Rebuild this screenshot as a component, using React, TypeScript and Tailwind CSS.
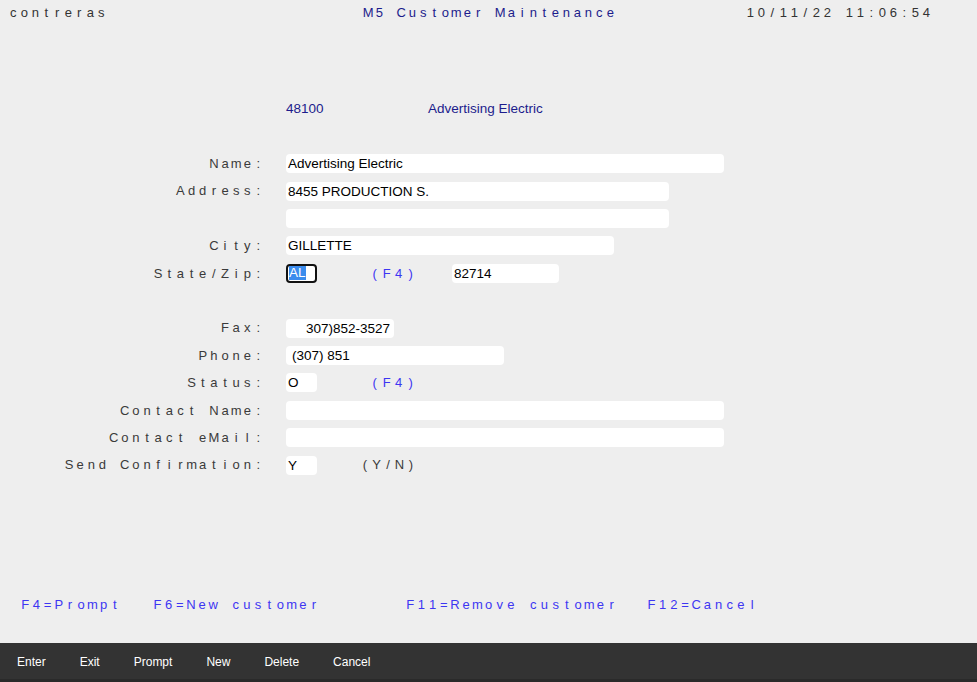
import React from "react";

function Sp({ t, cell, className = "" }: { t: string; cell: string; className?: string }) {
  return (
    <span className={"inline-flex whitespace-pre " + className}>
      {[...t].map((c, i) => (
        <span key={i} className={"inline-block text-center " + cell}>
          {c === " " ? "\u00a0" : c}
        </span>
      ))}
    </span>
  );
}

function Row({ label, children }: { label?: string; children?: React.ReactNode }) {
  return (
    <div className="flex items-center h-[27.4px]">
      <div className="w-[264px] flex justify-end shrink-0">
        {label ? <Sp t={label} cell="w-[11.15px]" className="text-[13px] text-[#3a3a3a]" /> : null}
      </div>
      <div className="ml-[22px] flex items-center">{children}</div>
    </div>
  );
}

function Field({ w, children, pad = "pl-[2px]" }: { w: string; children?: React.ReactNode; pad?: string }) {
  return (
    <div className={"h-[19px] bg-white rounded-[4px] text-[13.5px] leading-[19px] text-black whitespace-pre overflow-hidden shrink-0 " + w + " " + pad}>
      {children}
    </div>
  );
}

export default function App() {
  const buttons = ["Enter", "Exit", "Prompt", "New", "Delete", "Cancel"];
  return (
    <div className="h-screen flex flex-col bg-[#eeeeee] font-['Liberation_Sans',Arial,sans-serif] overflow-hidden">
      <div className="flex-1 pt-[1px]">
        <div className="flex items-center h-[24px] text-[13px]">
          <Sp t="contreras" cell="w-[11px]" className="ml-[7.75px] text-[#333333]" />
          <Sp t="M5 Customer Maintenance" cell="w-[11px]" className="ml-[256px] text-[#1c1c8c]" />
          <Sp t="10/11/22 11:06:54" cell="w-[11px]" className="ml-[129px] text-[#333333]" />
        </div>
        <div className="h-[70.3px]" />
        <div className="flex items-center h-[27.4px] pl-[286px] text-[13.5px] text-[#1c1c8c]">
          <span className="w-[142px]">48100</span>
          <span>Advertising Electric</span>
        </div>
        <div className="h-[27.4px]" />
        <Row label="Name:">
          <Field w="w-[438px]">Advertising Electric</Field>
        </Row>
        <Row label="Address:">
          <Field w="w-[383px]">8455 PRODUCTION S.</Field>
        </Row>
        <Row>
          <Field w="w-[383px]" />
        </Row>
        <Row label="City:">
          <Field w="w-[328px]">GILLETTE</Field>
        </Row>
        <Row label="State/Zip:">
          <div className="h-[19px] w-[31px] bg-white rounded-[4px] border-2 border-[#111111] flex items-center pl-[1px] shrink-0">
            <span className="bg-[#3b8ced] text-white text-[13.5px] leading-[14px]">AL</span>
          </div>
          <Sp t="(F4)" cell="w-[12px]" className="ml-[51.7px] text-[13px] text-[#3d36f2]" />
          <div className="ml-[35.3px]">
            <Field w="w-[107px]">82714</Field>
          </div>
        </Row>
        <div className="h-[27.4px]" />
        <Row label="Fax:">
          <Field w="w-[108px]" pad="pl-[20px]">307)852-3527</Field>
        </Row>
        <Row label="Phone:">
          <Field w="w-[218px]" pad="pl-[6px]">(307) 851</Field>
        </Row>
        <Row label="Status:">
          <Field w="w-[31px]">O</Field>
          <Sp t="(F4)" cell="w-[12px]" className="ml-[51.7px] text-[13px] text-[#3d36f2]" />
        </Row>
        <Row label="Contact Name:">
          <Field w="w-[438px]" />
        </Row>
        <Row label="Contact eMail:">
          <Field w="w-[438px]" />
        </Row>
        <Row label="Send Confirmation:">
          <Field w="w-[31px]">Y</Field>
          <Sp t="(Y/N)" cell="w-[11.5px]" className="ml-[42.25px] text-[13px] text-[#3a3a3a]" />
        </Row>
        <div className="h-[112.2px]" />
        <div className="flex items-center h-[27.4px] text-[13px] text-[#3d36f2]">
          <Sp t="F4=Prompt" cell="w-[11.2px]" className="ml-[19.6px]" />
          <Sp t="F6=New customer" cell="w-[11.2px]" className="ml-[31.5px]" />
          <Sp t="F11=Remove customer" cell="w-[11.2px]" className="ml-[85px]" />
          <Sp t="F12=Cancel" cell="w-[11.2px]" className="ml-[28.7px]" />
        </div>
      </div>
      <div className="h-[39px] shrink-0 bg-[#333333] border-b-[3px] border-[#2a2a2a] pt-[2px] flex items-center">
        {buttons.map((b) => (
          <span key={b} className="px-[17px] text-[12px] text-white">
            {b}
          </span>
        ))}
      </div>
    </div>
  );
}
